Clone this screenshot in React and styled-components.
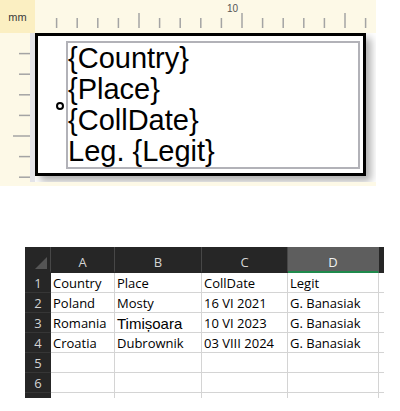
import { Fragment } from "react";
import styled, { createGlobalStyle } from "styled-components";

const Global = createGlobalStyle`
  html, body { margin: 0; padding: 0; background: #fff; }
  body { width: 400px; height: 411px; overflow: hidden; }
`

const MM = 20.6;

const Designer = styled.div`
  width: 376px;
  height: 186px;
  background: #fdf9e7;
  display: flex;
  flex-direction: column;
`
const TopBar = styled.div`
  display: flex;
  height: 33px;
`
const Corner = styled.div`
  width: 35px;
  background: #fbefc2;
  display: flex;
  align-items: center;
  justify-content: center;
  font-family: "Liberation Sans", Arial, sans-serif;
  font-size: 11px;
  color: #3a3a3a;
`
const Body = styled.div`
  display: flex;
  flex: 1;
`
const Canvas = styled.div`
  flex: 1;
  background: #fff;
  border-left: 5px solid #e3e3e8;
  overflow: hidden;
  height: 149px;
`
const Label = styled.div`
  position: relative;
  width: 331px;
  height: 143px;
  box-sizing: border-box;
  border: 3px solid #000;
  background: #fff;
  padding: 5px 3px 4px 28px;
  display: flex;
  box-shadow: 5px 5px 8px rgba(0, 0, 0, 0.32);
`
const Handle = styled.span`
  position: absolute;
  left: 18px;
  top: 66px;
  width: 8px;
  height: 8px;
  box-sizing: border-box;
  border: 2px solid #000;
  border-radius: 50%;
`
const FieldBox = styled.div`
  flex: 1;
  border: 2px solid #b2b2b8;
  display: flex;
  flex-direction: column;
`
const Field = styled.div`
  font-family: "Liberation Sans", Arial, sans-serif;
  font-size: 29px;
  line-height: 31px;
  color: #000;
  white-space: nowrap;
`

const Sheet = styled.div`
  margin: 61px 0 0 25px;
  width: 359px;
  height: 151px;
  overflow: hidden;
  display: grid;
  grid-template-columns: 26px 64px 87px 86px 91px 20px;
  grid-template-rows: 26px repeat(6, 20px) 20px;
  font-family: "Open Sans", sans-serif;
  font-size: 13px;
`
const HeadCell = styled.div`
  box-sizing: border-box;
  background: ${p => (p.$active ? "#5e5e5e" : "#262626")};
  border-right: 1px solid ${p => (p.$active ? "#5e5e5e" : "#474747")};
  border-bottom: 2px solid ${p => (p.$active ? "#1f8a4c" : "#262626")};
  color: ${p => (p.$active ? "#f0f0f0" : "#d4d4d4")};
  display: flex;
  align-items: center;
  justify-content: center;
  padding-top: 5px;
  position: relative;
`
const RowHead = styled.div`
  box-sizing: border-box;
  background: #262626;
  border-bottom: 1px solid #363636;
  color: #d4d4d4;
  display: flex;
  align-items: center;
  justify-content: center;
`
const Cell = styled.div`
  box-sizing: border-box;
  border-right: 1px solid #d4d4d4;
  border-bottom: 1px solid #d4d4d4;
  padding: 2px 0 0 2px;
  line-height: 17px;
  color: #000;
  white-space: nowrap;
  overflow: hidden;
  font-family: ${p => (p.$alt ? '"Liberation Sans", Arial, sans-serif' : '"Open Sans", sans-serif')};
  font-size: ${p => (p.$alt ? "15px" : "13px")};
`

function TopRuler() {
  const ticks = [];
  for (let i = 1; i <= 16; i++) {
    const x = 36 + i * MM - 35;
    const big = i % 5 === 0;
    ticks.push(
      <line key={i} x1={x} x2={x} y1={big ? 13 : 18} y2={28} stroke="#a4a4a4" strokeWidth="1.5" />
    );
  }
  return (
    <svg width="341" height="33">
      {ticks}
      <text x={36 + 10 * MM - 35 - 15} y="12" fontSize="10" fontFamily="Liberation Sans, Arial, sans-serif" fill="#555">10</text>
    </svg>
  );
}

function LeftRuler() {
  const ticks = [];
  for (let i = 1; i <= 7; i++) {
    const y = i * MM;
    const big = i % 5 === 0;
    ticks.push(
      <line key={i} x1={big ? 13 : 19} x2={30} y1={y} y2={y} stroke="#a4a4a4" strokeWidth="1.5" />
    );
  }
  return (
    <svg width="30" height="153" style={{ flexShrink: 0 }}>
      {ticks}
    </svg>
  );
}

const cols = ["A", "B", "C", "D"];
const rows = [
  ["Country", "Place", "CollDate", "Legit"],
  ["Poland", "Mosty", "16 VI 2021", "G. Banasiak"],
  ["Romania", "Timișoara", "10 VI 2023", "G. Banasiak"],
  ["Croatia", "Dubrownik", "03 VIII 2024", "G. Banasiak"],
  ["", "", "", ""],
  ["", "", "", ""],
  ["", "", "", ""],
];

export default function App() {
  return (
    <>
      <Global />
      <Designer>
        <TopBar>
          <Corner>mm</Corner>
          <TopRuler />
        </TopBar>
        <Body>
          <LeftRuler />
          <Canvas>
            <Label>
              <Handle />
              <FieldBox>
                <Field>{"{Country}"}</Field>
                <Field>{"{Place}"}</Field>
                <Field>{"{CollDate}"}</Field>
                <Field>{"Leg. {Legit}"}</Field>
              </FieldBox>
            </Label>
          </Canvas>
        </Body>
      </Designer>
      <Sheet>
        <HeadCell>
          <svg width="26" height="26" style={{ position: "absolute", left: 0, top: 0 }}>
            <polygon points="22,10 22,22 10,22" fill="#555" />
          </svg>
        </HeadCell>
        {cols.map(c => (
          <HeadCell key={c} $active={c === "D"}>{c}</HeadCell>
        ))}
        <HeadCell />
        {rows.map((r, i) => (
          <Fragment key={i}>
            {/* the 7th row only peeks out below the clip, its number is hidden */}
            <RowHead>{i < 6 ? i + 1 : ""}</RowHead>
            {r.map((v, j) => (
              <Cell key={j} $alt={v === "Timișoara"}>{v}</Cell>
            ))}
            <Cell />
          </Fragment>
        ))}
      </Sheet>
    </>
  );
}
